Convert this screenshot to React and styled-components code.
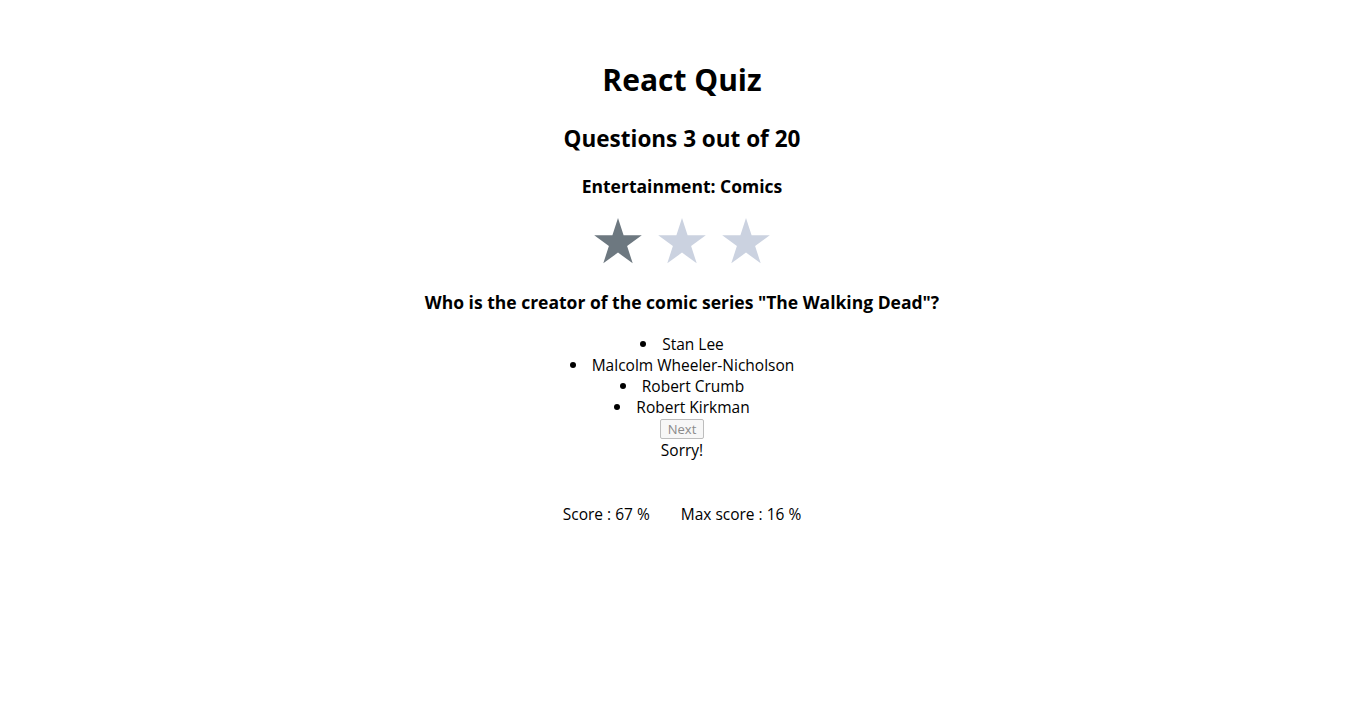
import React from "react";
import styled, { createGlobalStyle } from "styled-components";

const Global = createGlobalStyle`
  html, body { margin: 0; padding: 0; background: #fff; }
  body {
    font-family: "Open Sans", "Noto Sans", sans-serif;
    color: #000;
  }
`;

const Page = styled.div`
  display: flex;
  flex-direction: column;
  align-items: center;
  padding-top: 58px;
  text-align: center;
`;

const Title = styled.h1`
  margin: 0;
  font-size: 30px;
  font-weight: 700;
  line-height: 44px;
`;

const Counter = styled.h2`
  margin: 21px 0 0;
  font-size: 22.5px;
  font-weight: 700;
  line-height: 32px;
`;

const Category = styled.h3`
  margin: 19px 0 0;
  font-size: 17.5px;
  font-weight: 700;
  line-height: 24px;
`;

const Stars = styled.div`
  display: flex;
  gap: 16px;
  margin-top: 20px;
`;

const StarIcon = styled.svg`
  width: 48px;
  height: 46px;
  fill: ${(p) => (p.$on ? "#6d7880" : "#cbd2e0")};
`;

const Question = styled.h3`
  margin: 26px 0 0;
  font-size: 17.5px;
  font-weight: 700;
  line-height: 24px;
`;

const Answers = styled.ul`
  margin: 20px 0 0;
  padding: 0;
  list-style: none;
  font-size: 15.5px;
  line-height: 21px;
`;

const Answer = styled.li`
  &::before {
    content: "";
    display: inline-block;
    width: 6px;
    height: 6px;
    border-radius: 50%;
    background: #000;
    margin-right: 16px;
    vertical-align: 3px;
  }
`;

const NextButton = styled.button`
  margin-top: 1px;
  height: 20px;
  padding: 0 7px;
  font-family: inherit;
  font-size: 13px;
  line-height: 18px;
  color: #8a8a8a;
  background: #f7f7f7;
  border: 1px solid #bdbdbd;
  border-radius: 2px;
`;

const Feedback = styled.div`
  margin-top: 1px;
  font-size: 15.5px;
  line-height: 21px;
`;

const ScoreRow = styled.div`
  display: flex;
  gap: 31px;
  margin-top: 43px;
  font-size: 15.5px;
  line-height: 21px;
`;

const Star = ({ on }) => (
  <StarIcon $on={on} viewBox="0 0 48 46">
    <polygon points="24,0 29.6,17.3 47.8,17.3 33.1,28 38.7,45.3 24,34.6 9.3,45.3 14.9,28 0.2,17.3 18.4,17.3" />
  </StarIcon>
);

export default function App() {
  return (
    <>
      <Global />
      <Page>
        <Title>React Quiz</Title>
        <Counter>Questions 3 out of 20</Counter>
        <Category>Entertainment: Comics</Category>
        <Stars>
          <Star on />
          <Star />
          <Star />
        </Stars>
        <Question>Who is the creator of the comic series "The Walking Dead"?</Question>
        <Answers>
          <Answer>Stan Lee</Answer>
          <Answer>Malcolm Wheeler-Nicholson</Answer>
          <Answer>Robert Crumb</Answer>
          <Answer>Robert Kirkman</Answer>
        </Answers>
        <NextButton disabled>Next</NextButton>
        <Feedback>Sorry!</Feedback>
        <ScoreRow>
          <span>Score : 67 %</span>
          <span>Max score : 16 %</span>
        </ScoreRow>
      </Page>
    </>
  );
}
